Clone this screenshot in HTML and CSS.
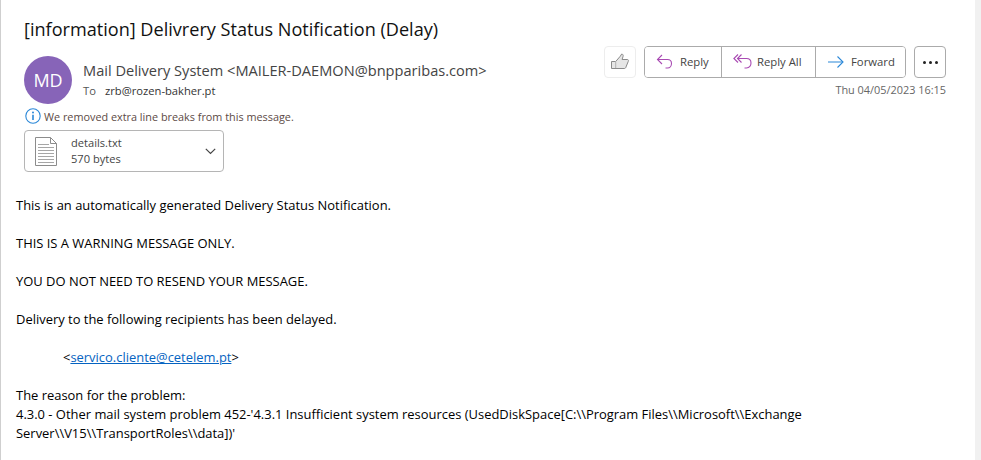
FILE: index.html
```html
<!DOCTYPE html>
<html lang="en">
<head>
<meta charset="utf-8">
<title>Delivery Status Notification</title>
<link rel="stylesheet" href="styles.css">
</head>
<body>
<main class="pane">
  <h1 class="subject">[information] Delivrery Status Notification (Delay)</h1>
  <header class="head">
    <div class="avatar">MD</div>
    <div class="who">
      <div class="from">Mail Delivery System &lt;MAILER-DAEMON@bnpparibas.com&gt;</div>
      <div class="to"><span class="to-label">To</span><span>zrb@rozen-bakher.pt</span></div>
    </div>
    <div class="actions">
      <div class="buttons">
        <button class="like" aria-label="Like">
          <svg width="20" height="18" viewBox="0 0 20 18"><path d="M1.5 8.5h4.2l4.6-5.3 1.4-2.2c1.3.2 1.700 1.200 1.400 2.300l-1 3.200h5.300c1 0 1.300 1 .9 1.800l-2.600 6.400c-.3.6-.7.8-1.300.8H1.500z" fill="#e6e6e6" stroke="#8a8a8a"/><path d="M5.700 8.500v6.500" stroke="#b0b0b0" fill="none"/></svg>
        </button>
        <div class="group">
          <button class="act act-reply">
            <svg width="18" height="18" viewBox="0 0 18 18" fill="none" stroke="#a94bb3" stroke-width="1.100"><path d="M6 2 1.500 6.500 6 11"/><path d="M1.500 6.500h10c2.500 0 4 1.700 4 4s-1.500 4.500-4 4.500h-2"/></svg>
            <span>Reply</span>
          </button>
          <button class="act act-all">
            <svg width="20" height="18" viewBox="0 0 20 18" fill="none" stroke="#a94bb3" stroke-width="1.100"><path d="M5 1.500.9 5.500 5 9.500"/><path d="M8.500 1.500 4.500 5.500 8.500 9.500"/><path d="M4.500 5.500h9c3 0 4.500 2 4.500 4.500s-1.500 5-4.500 5h-2"/></svg>
            <span>Reply All</span>
          </button>
          <button class="act act-fwd">
            <svg width="18" height="14" viewBox="0 0 18 14" fill="none" stroke="#2b88d8" stroke-width="1.100"><path d="M1 7h15"/><path d="M10.500 1.500 16 7l-5.500 5.500"/></svg>
            <span>Forward</span>
          </button>
        </div>
        <button class="more" aria-label="More"><i></i><i></i><i></i></button>
      </div>
      <div class="date">Thu 04/05/2023 16:15</div>
    </div>
  </header>
  <div class="notice">
    <svg width="16" height="16" viewBox="0 0 16 16"><circle cx="8" cy="8" r="7.200" fill="none" stroke="#2b88d8" stroke-width="1.100"/><circle cx="8" cy="4.600" r="1" fill="#2b88d8"/><path d="M8 6.800v5.200" stroke="#2b88d8" stroke-width="1.600"/></svg>
    <span>We removed extra line breaks from this message.</span>
  </div>
  <div class="attachment">
    <svg width="22" height="29" viewBox="0 0 22 29" fill="none" stroke="#8c8c8c"><path d="M.5.500h15l6 6v22H.5z" fill="#fff"/><path d="M15.500.500v6h6"/><path d="M3 7.500h11M3 10.500h16M3 13.500h16M3 16.500h16M3 19.500h16M3 22.500h16M3 25.500h16" stroke="#a6a6a6"/></svg>
    <div class="file">
      <div>details.txt</div>
      <div>570 bytes</div>
    </div>
    <svg class="chev" width="11" height="7" viewBox="0 0 11 7" fill="none" stroke="#444" stroke-width="1.200"><path d="M.8.800 5.500 5.500 10.200.8"/></svg>
  </div>
  <article class="body">
    <p>This is an automatically generated Delivery Status Notification.</p>
    <p>THIS IS A WARNING MESSAGE ONLY.</p>
    <p>YOU DO NOT NEED TO RESEND YOUR MESSAGE.</p>
    <p>Delivery to the following recipients has been delayed.</p>
    <p class="rcpt">&lt;<a href="#">servico.cliente@cetelem.pt</a>&gt;</p>
    <p>The reason for the problem:<br>4.3.0 - Other mail system problem 452-'4.3.1 Insufficient system resources (UsedDiskSpace[C:\\Program Files\\Microsoft\\Exchange Server\\V15\\TransportRoles\\data])'</p>
  </article>
</main>
<div class="strip"></div>
</body>
</html>
```

FILE: styles.css
```css
* { box-sizing: border-box; }
html, body { height: 100%; }
body {
  margin: 0;
  display: flex;
  height: 460px;
  overflow: hidden;
  background: #fff;
  font-family: "Open Sans", "Noto Sans", sans-serif;
  color: #1a1a1a;
}
.pane {
  width: 975px;
  height: 460px;
  border-left: 1px solid #cfcfcf;
  overflow: hidden;
}
.strip { flex: 1; background: #f1f1f1; }
.subject {
  margin: 0;
  padding: 17px 0 0 23px;
  height: 53px;
  font-size: 18.100px;
  line-height: 24px;
  font-weight: 400;
  color: #111;
}
.head { display: flex; align-items: flex-start; height: 51px; }
.avatar {
  width: 48px;
  height: 48px;
  margin: 3px 0 0 23px;
  border-radius: 50%;
  background: #8764b8;
  color: #fff;
  font-size: 18px;
  display: flex;
  align-items: center;
  justify-content: center;
}
.who { margin-left: 11px; flex: 1; }
.from { font-size: 14.600px; line-height: 20px; margin-top: 7px; color: #444; }
.to { font-size: 11.200px; line-height: 16px; margin-top: 3px; color: #333; display: flex; }
.to-label { width: 22px; color: #555; }
.actions { width: 342px; margin-right: 29px; margin-top: -7px; }
.buttons { display: flex; align-items: flex-start; }
button { font-family: inherit; background: #fff; cursor: default; padding: 0; }
.like {
  width: 32px; height: 32px;
  border: 1px solid #ededed; border-radius: 4px;
  display: flex; align-items: center; justify-content: center;
}
.group {
  display: flex; height: 32px; margin-left: 8px;
  border: 1px solid #ababab; border-radius: 4px;
  overflow: hidden;
}
.act {
  border: 0; border-right: 1px solid #ababab;
  display: flex; align-items: center;
  font-size: 11.300px; color: #444;
}
.act span { margin-bottom: 2px; }
.act:last-child { border-right: 0; }
.act-reply { width: 77px; padding-left: 11px; gap: 6px; }
.act-all { width: 94px; padding-left: 11px; gap: 4px; }
.act-fwd { width: 89px; padding-left: 11px; gap: 6px; }
.more {
  width: 32px; height: 32px; margin-left: 8px;
  border: 1px solid #ababab; border-radius: 4px;
  display: flex; align-items: center; justify-content: center; gap: 3px;
}
.more i { width: 3px; height: 3px; border-radius: 50%; background: #222; }
.date { text-align: right; font-size: 10.900px; line-height: 14px; margin-top: 5px; color: #666; white-space: nowrap; }
.notice { display: flex; align-items: center; gap: 3px; height: 16px; margin: 4px 0 0 24px; font-size: 10.850px; color: #5c4a45; }
.attachment {
  display: flex; align-items: center;
  width: 200px; height: 42px;
  margin: 6px 0 0 23px;
  border: 1px solid #b5b5b5; border-radius: 4px;
  padding-left: 10px;
}
.file { margin-left: 14px; font-size: 11.100px; line-height: 16px; color: #444; flex: 1; }
.chev { margin-right: 7px; }
.body {
  margin-top: 24px;
  padding: 0 160px 0 15px;
  font-size: 12.950px;
  line-height: 19px;
  color: #000;
}
.body p { margin: 0 0 19px; }
.rcpt { padding-left: 47px; }
.body a { color: #0563c1; }
```
